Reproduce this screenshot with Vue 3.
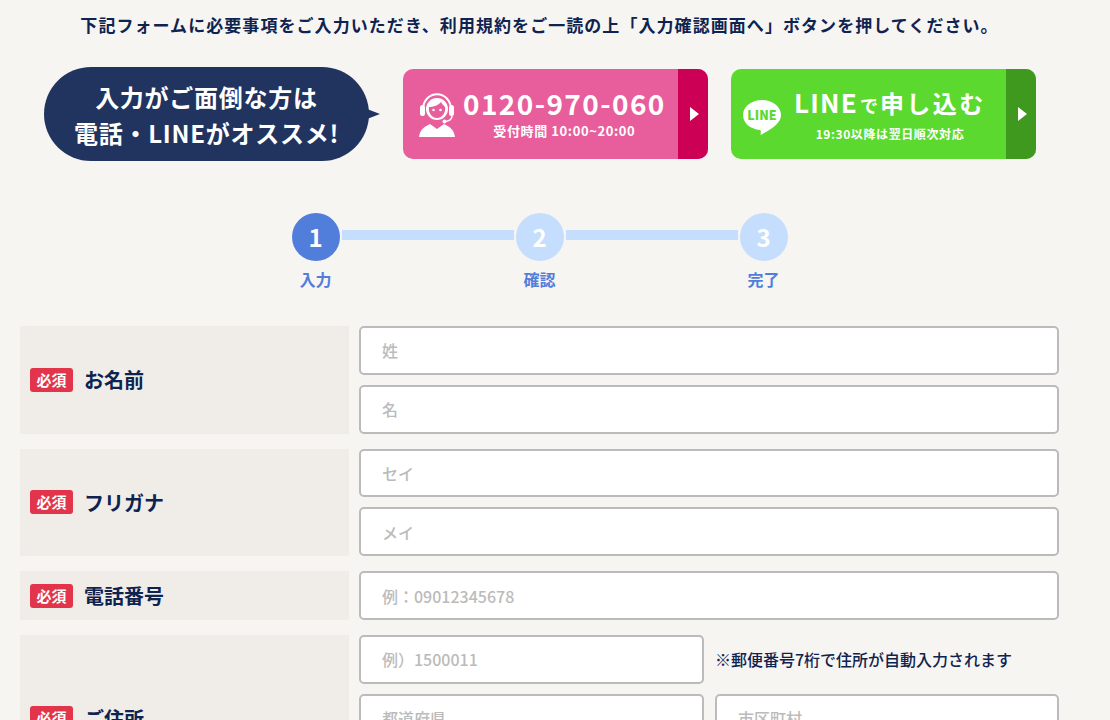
<script setup>
const steps = [
  { n: 1, label: '入力', active: true },
  { n: 2, label: '確認', active: false },
  { n: 3, label: '完了', active: false }
]
</script>

<template>
  <div class="page">
    <p class="lead">下記フォームに必要事項をご入力いただき、利用規約をご一読の上「入力確認画面へ」ボタンを押してください。</p>

    <div class="cta">
      <div class="bubble">入力がご面倒な方は<br />電話・LINEがオススメ!</div>

      <a class="btn btn-tel">
        <span class="btn-main">
          <svg class="icon-op" viewBox="0 0 36 46" width="36" height="46">
            <path d="M4 18 C4 -3 32 -3 32 18" fill="none" stroke="#fff" stroke-width="2" />
            <circle cx="18" cy="17" r="11" fill="#fff" />
            <path d="M10 15 C14 15 20 13 22 10 C23 12 25 14 26 15 C27 21 23 26 18 26 C13 26 9 21 10 15Z" fill="#e85d9b" />
            <circle cx="14.5" cy="18" r="1.3" fill="#fff" />
            <circle cx="21.5" cy="18" r="1.3" fill="#fff" />
            <rect x="1" y="13" width="5" height="11" rx="2.5" fill="#fff" />
            <rect x="30" y="13" width="5" height="11" rx="2.5" fill="#fff" />
            <path d="M33 24 C33 28 30 29 26 29.5" fill="none" stroke="#fff" stroke-width="1.5" />
            <circle cx="25.5" cy="29.5" r="2" fill="#fff" />
            <path d="M0 45 C1 37 6 34.5 11 32 L18 37 L25 32 C30 34.5 35 37 36 45Z" fill="#fff" />
          </svg>
          <span class="btn-text tel-text">
            <span class="tel-no">0120-970-060</span>
            <span class="tel-sub">受付時間 10:00~20:00</span>
          </span>
        </span>
        <span class="btn-arrow arrow-tel"><i></i></span>
      </a>

      <a class="btn btn-line">
        <span class="btn-main">
          <svg class="icon-line" viewBox="0 0 40 38" width="40" height="38">
            <path d="M20 1 C9 1 1 8 1 16 C1 24 8 30 18 31 C19 31 19 33 18.5 36 C24 33 39 26 39 16 C39 8 31 1 20 1Z" fill="#fff" />
            <text x="20" y="21" text-anchor="middle" class="line-mark">LINE</text>
          </svg>
          <span class="btn-text">
            <span class="line-title"><b>LINE</b><small>で</small>申し込む</span>
            <span class="line-sub">19:30以降は翌日順次対応</span>
          </span>
        </span>
        <span class="btn-arrow arrow-line"><i></i></span>
      </a>
    </div>

    <ol class="steps">
      <li v-for="s in steps" :key="s.n" class="step">
        <span class="dot" :class="{ on: s.active }">{{ s.n }}</span>
        <span class="step-label">{{ s.label }}</span>
      </li>
    </ol>

    <form class="form">
      <div class="row">
        <div class="label"><em>必須</em><span>お名前</span></div>
        <div class="fields">
          <input placeholder="姓" />
          <input placeholder="名" />
        </div>
      </div>
      <div class="row">
        <div class="label"><em>必須</em><span>フリガナ</span></div>
        <div class="fields">
          <input placeholder="セイ" />
          <input placeholder="メイ" />
        </div>
      </div>
      <div class="row">
        <div class="label"><em>必須</em><span>電話番号</span></div>
        <div class="fields">
          <input placeholder="例：09012345678" />
        </div>
      </div>
      <div class="row">
        <div class="label"><em>必須</em><span>ご住所</span></div>
        <div class="fields">
          <div class="pair">
            <input placeholder="例）1500011" />
            <span class="note">※郵便番号7桁で住所が自動入力されます</span>
          </div>
          <div class="pair">
            <input placeholder="都道府県" />
            <input placeholder="市区町村" />
          </div>
          <input placeholder="番地・建物名" />
        </div>
      </div>
    </form>
  </div>
</template>

<style scoped>
.page {
  height: 720px;
  overflow: hidden;
  background: #f7f5f2;
  font-family: "Noto Sans CJK JP", "Noto Sans", sans-serif;
  color: #0f2350;
  box-sizing: border-box;
  padding-top: 12px;
}
.lead {
  width: 1079px;
  margin: 0;
  text-align: center;
  font-size: 17px;
  line-height: 25px;
  font-weight: 700;
  letter-spacing: 1.06px;
  white-space: nowrap;
}
.cta {
  display: flex;
  align-items: center;
  margin: 30px 0 0 44px;
}
.bubble {
  position: relative;
  width: 325px;
  height: 94px;
  border-radius: 47px;
  background: #21335f;
  color: #fff;
  text-align: center;
  font-size: 24px;
  line-height: 36px;
  font-weight: 700;
  letter-spacing: 0.75px;
  padding-top: 12px;
  box-sizing: border-box;
  margin-right: 34px;
}
.bubble::after {
  content: "";
  position: absolute;
  right: -11px;
  top: 42px;
  border-left: 13px solid #21335f;
  border-top: 5px solid transparent;
  border-bottom: 5px solid transparent;
}
.btn {
  display: flex;
  width: 305px;
  height: 90px;
  border-radius: 10px;
  overflow: hidden;
  color: #fff;
}
.btn-tel { background: #e85d9b; margin-right: 23px; }
.btn-line { background: #5cd92e; }
.btn-main {
  flex: 1;
  display: flex;
  align-items: center;
  padding-left: 16px;
  white-space: nowrap;
}
.btn-text {
  display: flex;
  flex-direction: column;
  align-items: center;
}
.tel-text { margin-bottom: 2px; }
.icon-op { margin-right: 8px; margin-top: 1px; }
.tel-no {
  font-size: 28px;
  line-height: 34px;
  font-weight: 700;
  letter-spacing: 1.4px;
}
.tel-sub {
  margin-top: 2px;
  font-size: 13px;
  line-height: 18px;
  font-weight: 700;
  letter-spacing: 0.6px;
}
.icon-line { margin-left: -5px; margin-right: 12px; margin-top: 8px; }
.line-mark {
  font-size: 12.5px;
  font-weight: 900;
  fill: #5cd92e;
  font-family: "Noto Sans CJK JP", sans-serif;
}
.line-title {
  font-size: 24px;
  line-height: 32px;
  font-weight: 700;
  letter-spacing: 2.5px;
}
.line-title b {
  font-size: 26px;
  font-weight: 700;
  letter-spacing: 1.2px;
}
.line-title small {
  font-size: 18px;
  letter-spacing: 2px;
  margin-left: 2px;
}
.line-sub {
  margin-top: 4px;
  font-size: 12px;
  line-height: 18px;
  font-weight: 700;
  letter-spacing: 0.6px;
}
.btn-arrow {
  width: 30px;
  padding-left: 2px;
  box-sizing: border-box;
  display: flex;
  align-items: center;
  justify-content: center;
}
.btn-arrow i {
  border-left: 9px solid #fff;
  border-top: 7px solid transparent;
  border-bottom: 7px solid transparent;
}
.arrow-tel { background: #cc0055; }
.arrow-line { background: #3f991f; }

.steps {
  list-style: none;
  display: flex;
  justify-content: center;
  width: 1079px;
  margin: 52px 0 0;
  padding: 0;
}
.step {
  position: relative;
  width: 224px;
  display: flex;
  flex-direction: column;
  align-items: center;
}
.step:not(:last-child)::after {
  content: "";
  position: absolute;
  left: 138px;
  width: 172px;
  top: 17px;
  height: 10px;
  background: #c5defd;
}
.dot {
  width: 48px;
  height: 48px;
  border-radius: 50%;
  background: #c5defd;
  color: #fff;
  font-size: 24px;
  line-height: 48px;
  font-weight: 700;
  text-align: center;
}
.dot.on { background: #527edb; }
.step-label {
  margin-top: 6px;
  font-size: 16px;
  line-height: 24px;
  font-weight: 700;
  color: #527edb;
}

.form {
  width: 1039px;
  margin: 35px 0 0 20px;
  display: flex;
  flex-direction: column;
  gap: 15px;
}
.row {
  display: flex;
  gap: 10px;
}
.label {
  width: 329px;
  flex: none;
  background: #f0ede8;
  display: flex;
  align-items: center;
  padding-left: 10px;
  box-sizing: border-box;
  font-size: 20px;
  font-weight: 700;
  color: #0f2350;
}
.label em {
  font-style: normal;
  width: 43px;
  height: 24px;
  line-height: 24px;
  text-align: center;
  border-radius: 3px;
  background: #e2344a;
  color: #fff;
  font-size: 15px;
  font-weight: 700;
  margin-right: 11px;
}
.fields {
  flex: 1;
  display: flex;
  flex-direction: column;
  gap: 10px;
}
.pair {
  display: flex;
  gap: 11px;
  align-items: center;
}
.pair input { flex: none; width: 345px; }
.pair input:last-child { width: 344px; }
.note {
  font-size: 16px;
  font-weight: 500;
  color: #0f2350;
  white-space: nowrap;
}
input {
  display: block;
  box-sizing: border-box;
  width: 100%;
  height: 48.8px;
  border: 2px solid #bbb;
  border-radius: 5px;
  background: #fff;
  padding: 0 21px;
  font-family: inherit;
  font-size: 16px;
  font-weight: 500;
  outline: none;
}
input::placeholder {
  color: #bbb;
  opacity: 1;
}
</style>
